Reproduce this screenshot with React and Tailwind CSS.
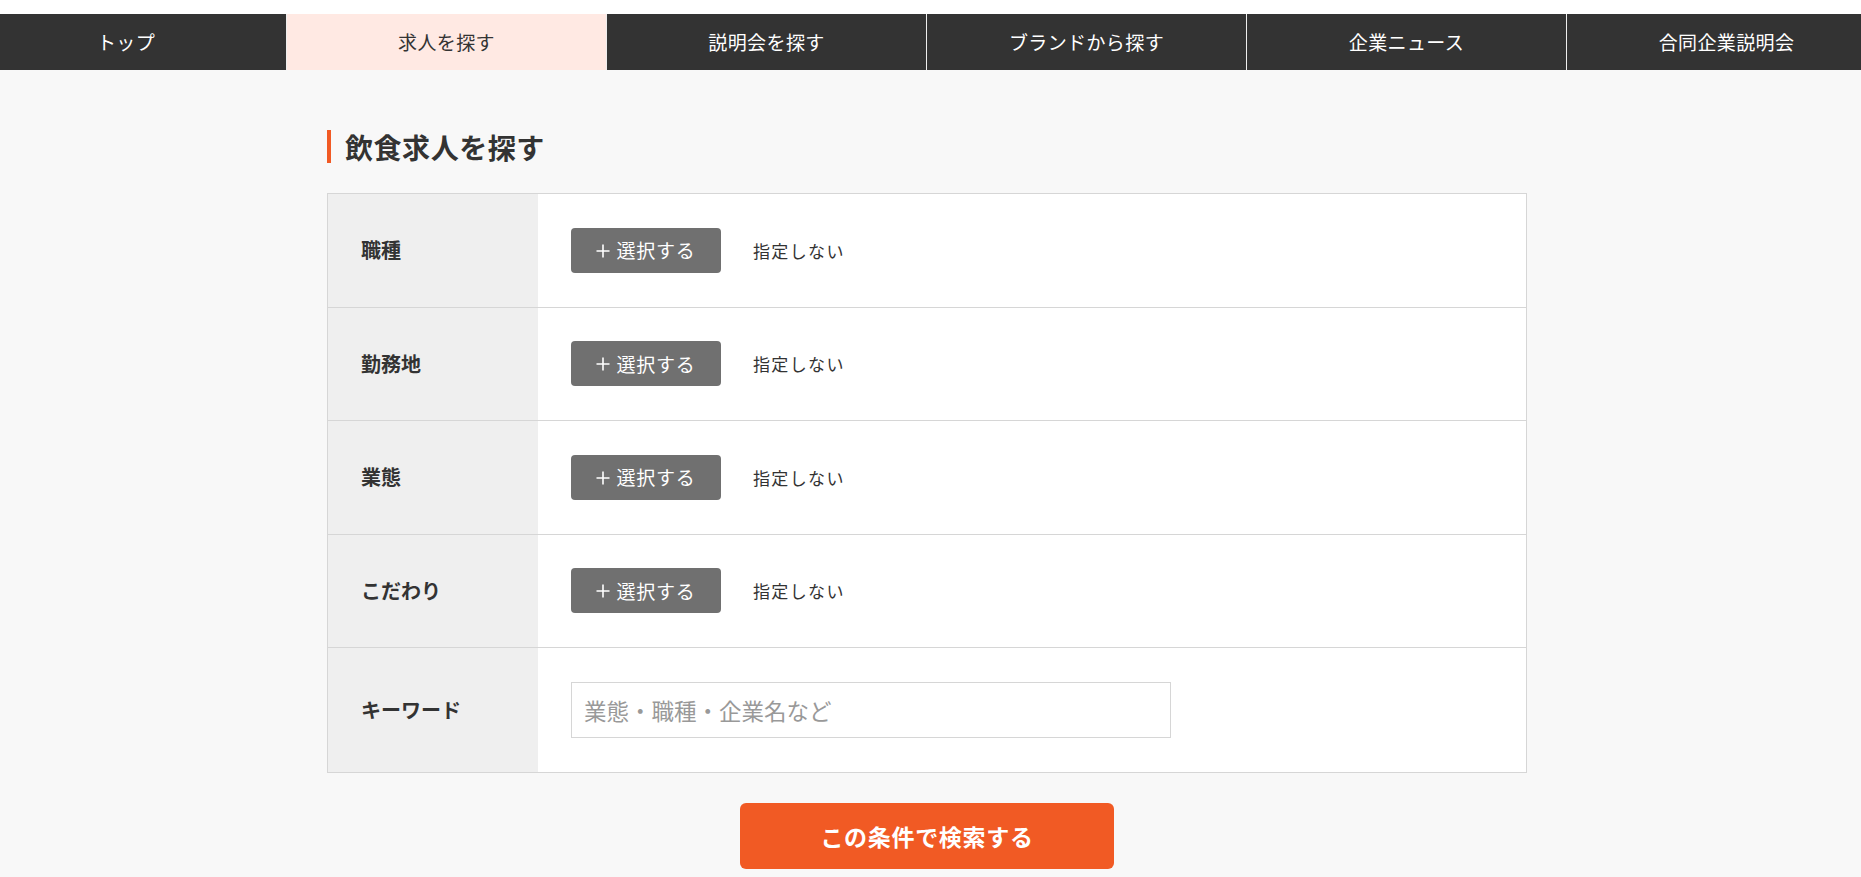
import React from 'react';

const font = { fontFamily: '"Noto Sans CJK JP", "Noto Sans", sans-serif' };

const tabs = ['トップ', '求人を探す', '説明会を探す', 'ブランドから探す', '企業ニュース', '合同企業説明会'];

// Top navigation bar
const Nav = () => {
  return (
    <div className="mt-[14px] h-[56px] overflow-hidden bg-[#333333]">
      <ul className="flex w-[1920px] -ml-[34px] h-full">
        {tabs.map((t, i) => (
          <li
            key={t}
            className={
              'w-[320px] h-full flex items-center justify-center text-[19px] tracking-[0.02em] ' +
              (i > 0 ? 'border-l border-[#eeeeee] ' : '') +
              (i === 1 ? 'bg-[#ffe9e3] text-[#333333]' : 'text-white')
            }
          >
            {t}
          </li>
        ))}
      </ul>
    </div>
  );
};

const SelectRow = ({ label }) => {
  return (
    <div className="flex h-[113.5px] border-b border-[#d6d6d6]">
      <div className="w-[210px] bg-[#efefef] flex items-center pl-[33px] text-[20px] font-bold text-[#333333]">
        {label}
      </div>
      <div className="flex-1 bg-white flex items-center pl-[33px]">
        <button className="w-[150px] h-[45px] rounded-[4px] bg-[#707070] text-white text-[19px] flex items-center justify-center gap-[6px] tracking-[0.04em]">
          <svg width="14" height="14" viewBox="0 0 14 14" className="mt-[1px]">
            <path d="M7 0.5v13M0.5 7h13" stroke="white" strokeWidth="1.6" fill="none" />
          </svg>
          <span>選択する</span>
        </button>
        <span className="ml-[32px] text-[17px] text-[#333333] tracking-[0.08em]">指定しない</span>
      </div>
    </div>
  );
};

const App = () => {
  return (
    <div className="min-h-screen bg-[#f8f8f8]" style={font}>
      <div className="bg-white">
        <Nav />
      </div>

      <div className="pr-[7px] pb-[20px]">
        <div className="w-[1200px] mx-auto pt-[60px]">
          {/* section heading */}
          <div className="flex items-center h-[33px] border-l-[4px] border-[#f15a24] pl-[14px]">
            <h2 className="text-[28px] font-bold text-[#333333] tracking-[0.02em]">飲食求人を探す</h2>
          </div>

          {/* search form */}
          <div className="mt-[30px] border-l border-r border-t border-[#d6d6d6]">
            <SelectRow label="職種" />
            <SelectRow label="勤務地" />
            <SelectRow label="業態" />
            <SelectRow label="こだわり" />
            <div className="flex h-[125px] border-b border-[#d6d6d6]">
              <div className="w-[210px] bg-[#efefef] flex items-center pl-[33px] text-[20px] font-bold text-[#333333]">
                キーワード
              </div>
              <div className="flex-1 bg-white flex items-center pl-[33px]">
                <input
                  type="text"
                  placeholder="業態・職種・企業名など"
                  className="w-[600px] h-[56px] border border-[#d6d6d6] px-[12px] text-[22.5px] text-[#333333] placeholder:text-[#999999] outline-none"
                  style={font}
                />
              </div>
            </div>
          </div>

          <div className="flex justify-center mt-[30px]">
            <button className="w-[374px] h-[66px] rounded-[6px] bg-[#f15a24] text-white text-[23px] font-bold tracking-[0.03em]">
              この条件で検索する
            </button>
          </div>
        </div>
      </div>
    </div>
  );
};

export default App;
